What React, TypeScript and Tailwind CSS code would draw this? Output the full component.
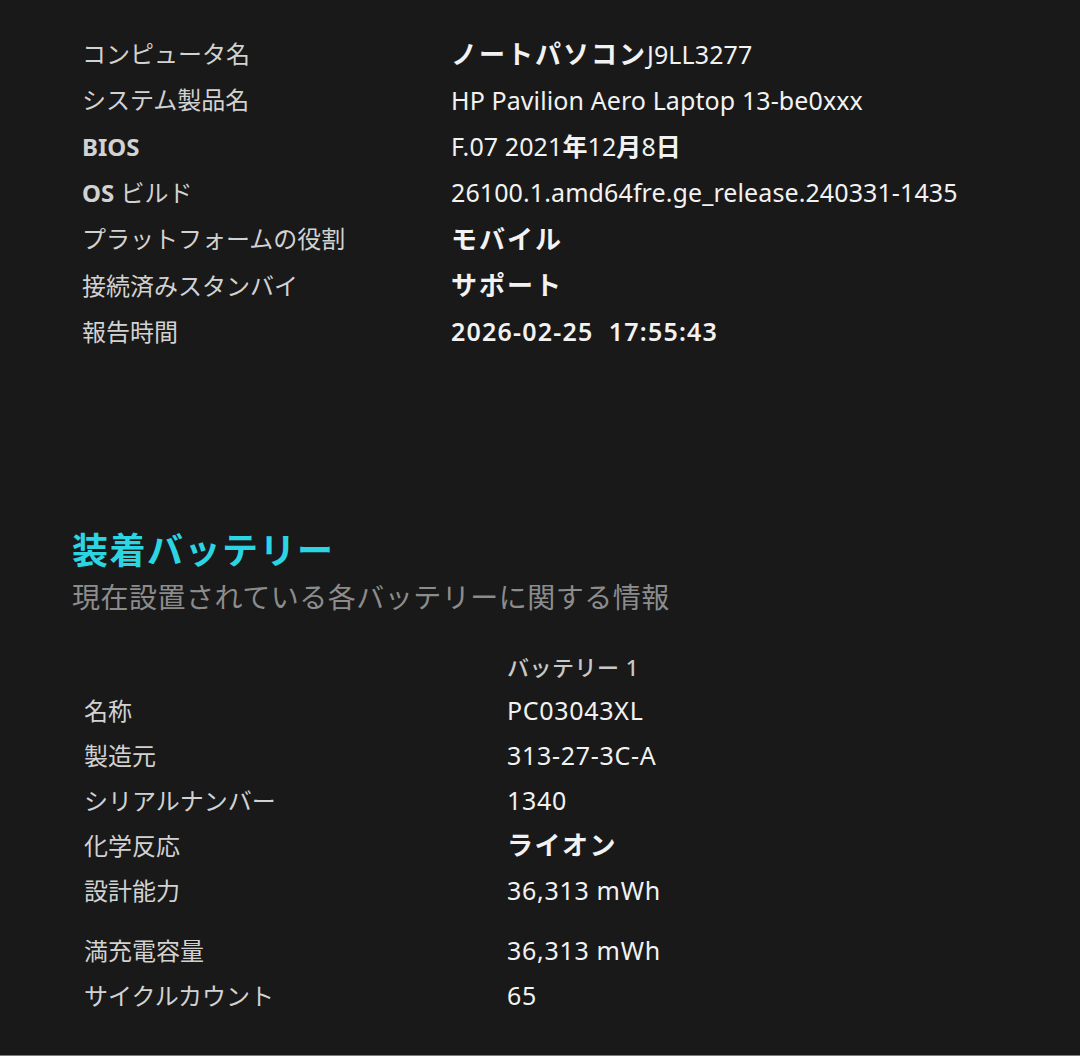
const font = { fontFamily: '"Noto Sans", "Noto Sans CJK JP", sans-serif' }

type Row = { label: React.ReactNode; value: React.ReactNode; gap?: boolean }

const jp = 'text-[26px] tracking-[2px] font-semibold'

const systemRows: Row[] = [
  { label: 'コンピュータ名', value: <span><span className={jp}>ノートパソコン</span>J9LL3277</span> },
  { label: 'システム製品名', value: 'HP Pavilion Aero Laptop 13-be0xxx' },
  { label: <span className="font-bold">BIOS</span>, value: <span>F.07 2021<span className="font-bold">年</span>12<span className="font-bold">月</span>8<span className="font-bold">日</span></span> },
  { label: <span><span className="font-bold">OS</span> ビルド</span>, value: '26100.1.amd64fre.ge_release.240331-1435' },
  { label: 'プラットフォームの役割', value: <span className={jp}>モバイル</span> },
  { label: '接続済みスタンバイ', value: <span className={jp}>サポート</span> },
  { label: '報告時間', value: <span className="font-semibold tracking-[1.2px]">2026-02-25&nbsp;&nbsp;17:55:43</span> },
]

const batteryRows: Row[] = [
  { label: '名称', value: 'PC03043XL' },
  { label: '製造元', value: '313-27-3C-A' },
  { label: 'シリアルナンバー', value: '1340' },
  { label: '化学反応', value: <span className="text-[26px] tracking-[1.5px] font-semibold">ライオン</span> },
  { label: '設計能力', value: '36,313 mWh' },
  { label: '満充電容量', value: '36,313 mWh', gap: true },
  { label: 'サイクルカウント', value: '65' },
]

export default function App() {
  return (
    <div style={font} className="w-full h-[1056px] bg-[#191919] border-b border-[#7d7d7d] overflow-hidden">
      {/* system info */}
      <div className="pt-[31px] pl-[82px] grid grid-cols-[369px_1fr]">
        {systemRows.map((r, i) => (
          <div key={i} className="contents">
            <div className="h-[46.3px] flex items-center text-[24px] text-[#d2d2d2] whitespace-nowrap">{r.label}</div>
            <div className="h-[46.3px] flex items-center text-[25px] tracking-[0.1px] text-[#f2f2f2] whitespace-nowrap">{r.value}</div>
          </div>
        ))}
      </div>

      {/* installed batteries */}
      <div className="mt-[172px] pl-[72px]">
        <h2 className="text-[36px] leading-[48px] font-bold text-[#2bd6e2] tracking-[1.5px]">装着バッテリー</h2>
        <p className="mt-[2px] text-[28px] leading-[40px] tracking-[0.5px] text-[#8c8c8c]">現在設置されている各バッテリーに関する情報</p>
      </div>

      <div className="mt-[29px] pl-[84px] grid grid-cols-[423px_1fr]">
        <div className="h-[42px]" />
        <div className="h-[42px] flex items-center text-[22px] tracking-[0.5px] font-medium text-[#c8c8c8]">バッテリー 1</div>
        {batteryRows.map((r, i) => (
          <div key={i} className="contents">
            <div className={`h-[45px] flex items-center text-[24px] text-[#d2d2d2] whitespace-nowrap ${r.gap ? 'mt-[15px]' : ''}`}>{r.label}</div>
            <div className={`h-[45px] flex items-center text-[25px] tracking-[0.7px] text-[#f2f2f2] whitespace-nowrap ${r.gap ? 'mt-[15px]' : ''}`}>{r.value}</div>
          </div>
        ))}
      </div>
    </div>
  )
}
